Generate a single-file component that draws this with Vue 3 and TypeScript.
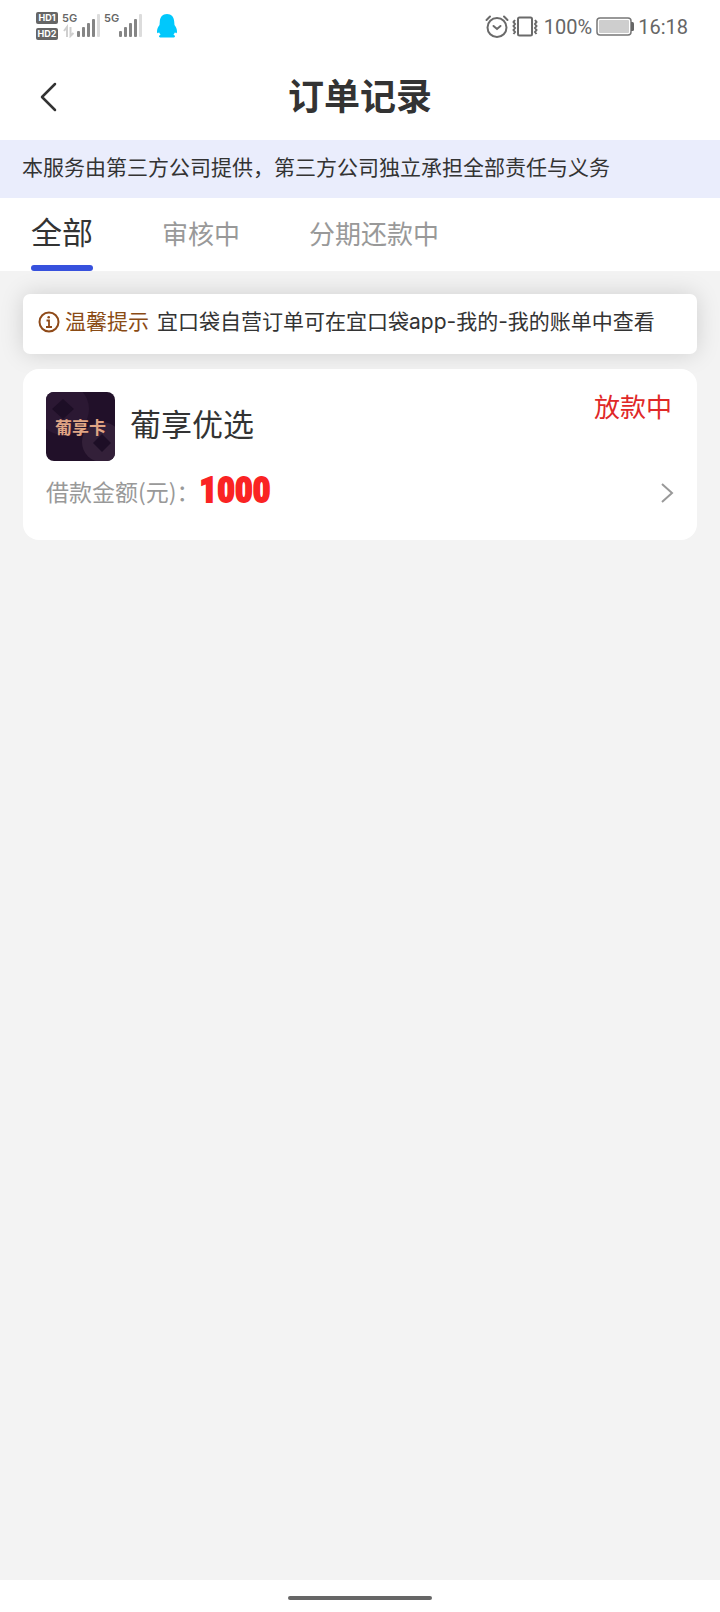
<script setup lang="ts">
import { ref } from 'vue'

interface Order {
  id: number
  name: string
  status: string
  amount: number
}

const tabs: string[] = ['全部', '审核中', '分期还款中']
const activeTab = ref<number>(0)

const orders: Order[] = [{ id: 1, name: '葡享优选', status: '放款中', amount: 1000 }]
</script>

<template>
  <div class="screen">
    <div class="status-bar">
      <div class="status-left">
        <div class="hd-stack">
          <span class="hd">HD1</span>
          <span class="hd">HD2</span>
        </div>
        <div class="network">
          <span class="gen">5G</span>
          <svg width="40" height="24" viewBox="0 0 40 24" aria-hidden="true">
            <g fill="none" stroke="#cfcfcf" stroke-width="2">
              <path d="M5 23V13L2 17M8.500 13v9l3-3" />
            </g>
            <g fill="#858585">
              <rect x="15" y="17" width="3" height="6" rx="1" />
              <rect x="20" y="13" width="3" height="10" rx="1" />
              <rect x="25" y="9" width="3" height="14" rx="1" />
              <rect x="30" y="5" width="3" height="18" rx="1" />
              <rect x="35" y="0" width="3" height="23" rx="1" fill="#dcdcdc" />
            </g>
          </svg>
        </div>
        <div class="network">
          <span class="gen">5G</span>
          <svg width="40" height="24" viewBox="0 0 40 24" aria-hidden="true">
            <g fill="#858585">
              <rect x="15" y="17" width="3" height="6" rx="1" />
              <rect x="20" y="13" width="3" height="10" rx="1" />
              <rect x="25" y="9" width="3" height="14" rx="1" />
              <rect x="30" y="5" width="3" height="18" rx="1" />
              <rect x="35" y="0" width="3" height="23" rx="1" fill="#dcdcdc" />
            </g>
          </svg>
        </div>
        <svg class="penguin" width="22" height="24" viewBox="0 0 22 24" aria-hidden="true">
          <path
            fill="#00c8fc"
            d="M11 0C6.500 0 4 3 3.800 7.500L3.500 11C2 13 1 15 1 17.500c0 2 .8 2.200 2 .8.400 1 .9 1.800 1.600 2.500-.9.400-1.600.9-1.600 1.600 0 1 1.500 1.100 4 1.100h8c2.500 0 4-.1 4-1.100 0-.7-.7-1.200-1.600-1.600.7-.7 1.200-1.500 1.600-2.500 1.200 1.400 2 1.200 2-.8 0-2.500-1-4.500-2.500-6.500l-.3-3.500C18 3 15.500 0 11 0z"
          />
        </svg>
      </div>
      <div class="status-right">
        <svg width="24" height="24" viewBox="0 0 24 24" fill="none" stroke="#6a6a6a" stroke-width="2" stroke-linecap="round" aria-hidden="true">
          <circle cx="12" cy="12.500" r="9.500" />
          <path d="M8.500 11l3.500 3 3.500-3M1.500 5l3.500-3.500M22.500 5L19 1.500" />
        </svg>
        <svg class="vibrate" width="26" height="24" viewBox="0 0 26 24" fill="none" stroke="#6a6a6a" stroke-width="2" aria-hidden="true">
          <rect x="6" y="2.500" width="14" height="18" rx="1.500" />
          <path d="M3 5L1.500 7 3 9 1.500 11 3 13 1.500 15 3 17 1.500 19M23 5l1.500 2L23 9l1.500 2L23 13l1.500 2L23 17l1.500 2" />
        </svg>
        <span class="battery-level">100%</span>
        <svg width="38" height="20" viewBox="0 0 38 20" aria-hidden="true">
          <rect x="1" y="1" width="34" height="17" rx="3" fill="#fff" stroke="#777" stroke-width="1.500" />
          <rect x="3" y="3" width="30" height="13" rx="1" fill="#cecece" />
          <path d="M35 5h1.500q1.500 0 1.500 1.500v6q0 1.500-1.500 1.500H35z" fill="#666" />
        </svg>
        <span class="clock">16:18</span>
      </div>
    </div>

    <header class="header">
      <button class="back" type="button" aria-label="返回">
        <svg width="20" height="30" viewBox="0 0 20 30" fill="none" stroke="#333" stroke-width="2.500" stroke-linecap="round" stroke-linejoin="round" aria-hidden="true">
          <path d="M15 2L2 15l13 13" />
        </svg>
      </button>
      <h1 class="title">订单记录</h1>
    </header>

    <p class="notice">本服务由第三方公司提供，第三方公司独立承担全部责任与义务</p>

    <nav class="tabs">
      <button
        v-for="(tab, index) in tabs"
        :key="tab"
        type="button"
        class="tab"
        :class="{ active: index === activeTab }"
        @click="activeTab = index"
      >
        {{ tab }}
      </button>
    </nav>

    <main class="content">
      <div class="tip">
        <svg width="22" height="22" viewBox="0 0 22 22" fill="none" stroke="#8f4a18" stroke-width="2" aria-hidden="true">
          <circle cx="11" cy="11" r="9.500" />
          <path d="M8.500 9.500H11V16M8 16h6" stroke-width="1.800" />
          <circle cx="10.700" cy="6.200" r="1.300" fill="#8f4a18" stroke="none" />
        </svg>
        <p class="tip-body">
          <strong class="tip-label">温馨提示</strong>
          <span>宜口袋自营订单可在宜口袋app-我的-我的账单中查看</span>
        </p>
      </div>

      <article v-for="order in orders" :key="order.id" class="order">
        <div class="order-head">
          <div class="logo">
            <svg class="logo-art" width="69" height="69" viewBox="0 0 69 69" aria-hidden="true">
              <circle cx="17" cy="17" r="26" fill="#2b1833" />
              <circle cx="56" cy="50" r="20" fill="#332039" />
              <path d="M17 7l11 10-11 10L6 17z" fill="#1d0e26" />
              <path d="M56 42l9 9-9 9-9-9z" fill="#1d0e26" />
            </svg>
            <span class="logo-text">葡享卡</span>
          </div>
          <h2 class="name">{{ order.name }}</h2>
          <span class="state">{{ order.status }}</span>
        </div>
        <div class="order-row">
          <span class="label">借款金额(元)：</span>
          <span class="amount">{{ order.amount }}</span>
          <button class="detail" type="button" aria-label="查看详情">
            <svg width="13" height="20" viewBox="0 0 13 20" fill="none" stroke="#999" stroke-width="2" aria-hidden="true">
              <path d="M1 1l10 9-10 9" />
            </svg>
          </button>
        </div>
      </article>
    </main>

    <div class="gesture-bar"><span class="handle"></span></div>
  </div>
</template>

<style>
body {
  margin: 0;
}
</style>

<style scoped>
.screen {
  display: flex;
  flex-direction: column;
  min-height: 100vh;
  background: #f3f3f3;
  color: #333;
  font-family: "Noto Sans CJK SC", sans-serif;
}

button {
  padding: 0;
  border: 0;
  background: none;
  font-family: inherit;
  cursor: pointer;
}

svg {
  display: block;
  flex: none;
}

.status-bar {
  display: flex;
  justify-content: space-between;
  align-items: center;
  height: 54px;
  padding: 0 32px 0 36px;
  box-sizing: border-box;
  background: #fff;
}

.status-left,
.status-right {
  display: flex;
  align-items: center;
}

.status-left {
  padding-bottom: 2px;
}

.hd-stack {
  display: grid;
  gap: 4px;
  margin-right: 4px;
}

.hd {
  width: 22px;
  border-radius: 2px;
  background: #666;
  color: #fff;
  font: bold 9px/12px Inter, sans-serif;
  text-align: center;
}

.network {
  position: relative;
  width: 42px;
}

.gen {
  position: absolute;
  top: -2px;
  left: 0;
  color: #666;
  font: 600 11px/12px Inter, sans-serif;
}

.penguin {
  margin-left: 10px;
}

.status-right {
  color: #666;
  font: 20px/24px Roboto, sans-serif;
}

.vibrate {
  margin-left: 3px;
}

.battery-level {
  margin: 0 4px 0 6px;
}

.clock {
  margin-left: 4px;
}

.header {
  display: grid;
  grid-template-columns: 60px 1fr 60px;
  align-items: center;
  height: 86px;
  padding: 0 20px;
  background: #fff;
}

.back {
  display: grid;
  place-items: center;
  width: 60px;
  height: 60px;
}

.title {
  margin: 0;
  padding-bottom: 6px;
  font-size: 36px;
  line-height: 48px;
  font-weight: 700;
  text-align: center;
}

.notice {
  margin: 0;
  padding: 10px 22px 16px;
  background: #eaedfc;
  font-size: 21px;
  line-height: 32px;
}

.tabs {
  display: flex;
  gap: 69px;
  height: 73px;
  padding: 0 31px;
  background: #fff;
}

.tab {
  padding-bottom: 4px;
  color: #999;
  font-size: 26px;
  line-height: 40px;
  white-space: nowrap;
}

.tab.active {
  position: relative;
  padding-bottom: 8px;
  color: #333;
  font-size: 31px;
}

.tab.active::after {
  content: "";
  position: absolute;
  right: 0;
  bottom: 0;
  left: 0;
  height: 6px;
  border-radius: 3px;
  background: #3751dd;
}

.content {
  display: flex;
  flex: 1;
  flex-direction: column;
  gap: 15px;
  padding: 23px;
}

.tip {
  display: flex;
  align-items: center;
  height: 60px;
  padding: 0 15px 4px;
  box-sizing: border-box;
  border-radius: 7px;
  background: #fff;
  box-shadow: 0 0 23px rgba(0, 0, 0, 0.15);
  font-family: Inter, "Noto Sans CJK SC", sans-serif;
  font-size: 21px;
  line-height: 32px;
  white-space: nowrap;
}

.tip-body {
  display: flex;
  gap: 8px;
  margin: 0 0 0 5px;
}

.tip-label {
  color: #8a4b14;
  font-weight: 400;
}

.order {
  padding: 23px 23px 30px;
  border-radius: 16px;
  background: #fff;
}

.order-head {
  display: flex;
  align-items: center;
}

.logo {
  position: relative;
  display: grid;
  place-items: center;
  width: 69px;
  height: 69px;
  overflow: hidden;
  border-radius: 8px;
  background: #211029;
}

.logo-art {
  position: absolute;
  inset: 0;
}

.logo-text {
  position: relative;
  color: #e0a584;
  font-size: 17px;
  line-height: 24px;
  font-weight: 700;
}

.name {
  margin: 0 0 0 15px;
  padding-bottom: 8px;
  font-size: 31px;
  line-height: 40px;
  font-weight: 400;
}

.state {
  align-self: flex-start;
  margin: 0 2px 0 auto;
  color: #e02828;
  font-size: 26px;
  line-height: 28px;
}

.order-row {
  display: flex;
  align-items: center;
  height: 49px;
  padding-top: 10px;
  box-sizing: border-box;
}

.label {
  color: #999;
  font-size: 23px;
  line-height: 40px;
}

.amount {
  color: #fa2323;
  font: 700 35px/40px "Roboto Condensed", Roboto, sans-serif;
  -webkit-text-stroke: 2px #fa2323;
}

.detail {
  margin-left: auto;
  padding-top: 4px;
}

.gesture-bar {
  display: grid;
  place-items: center;
  height: 32px;
  padding-top: 4px;
  box-sizing: border-box;
  background: #fff;
}

.handle {
  width: 20%;
  height: 4px;
  border-radius: 2px;
  background: #666;
}
</style>
